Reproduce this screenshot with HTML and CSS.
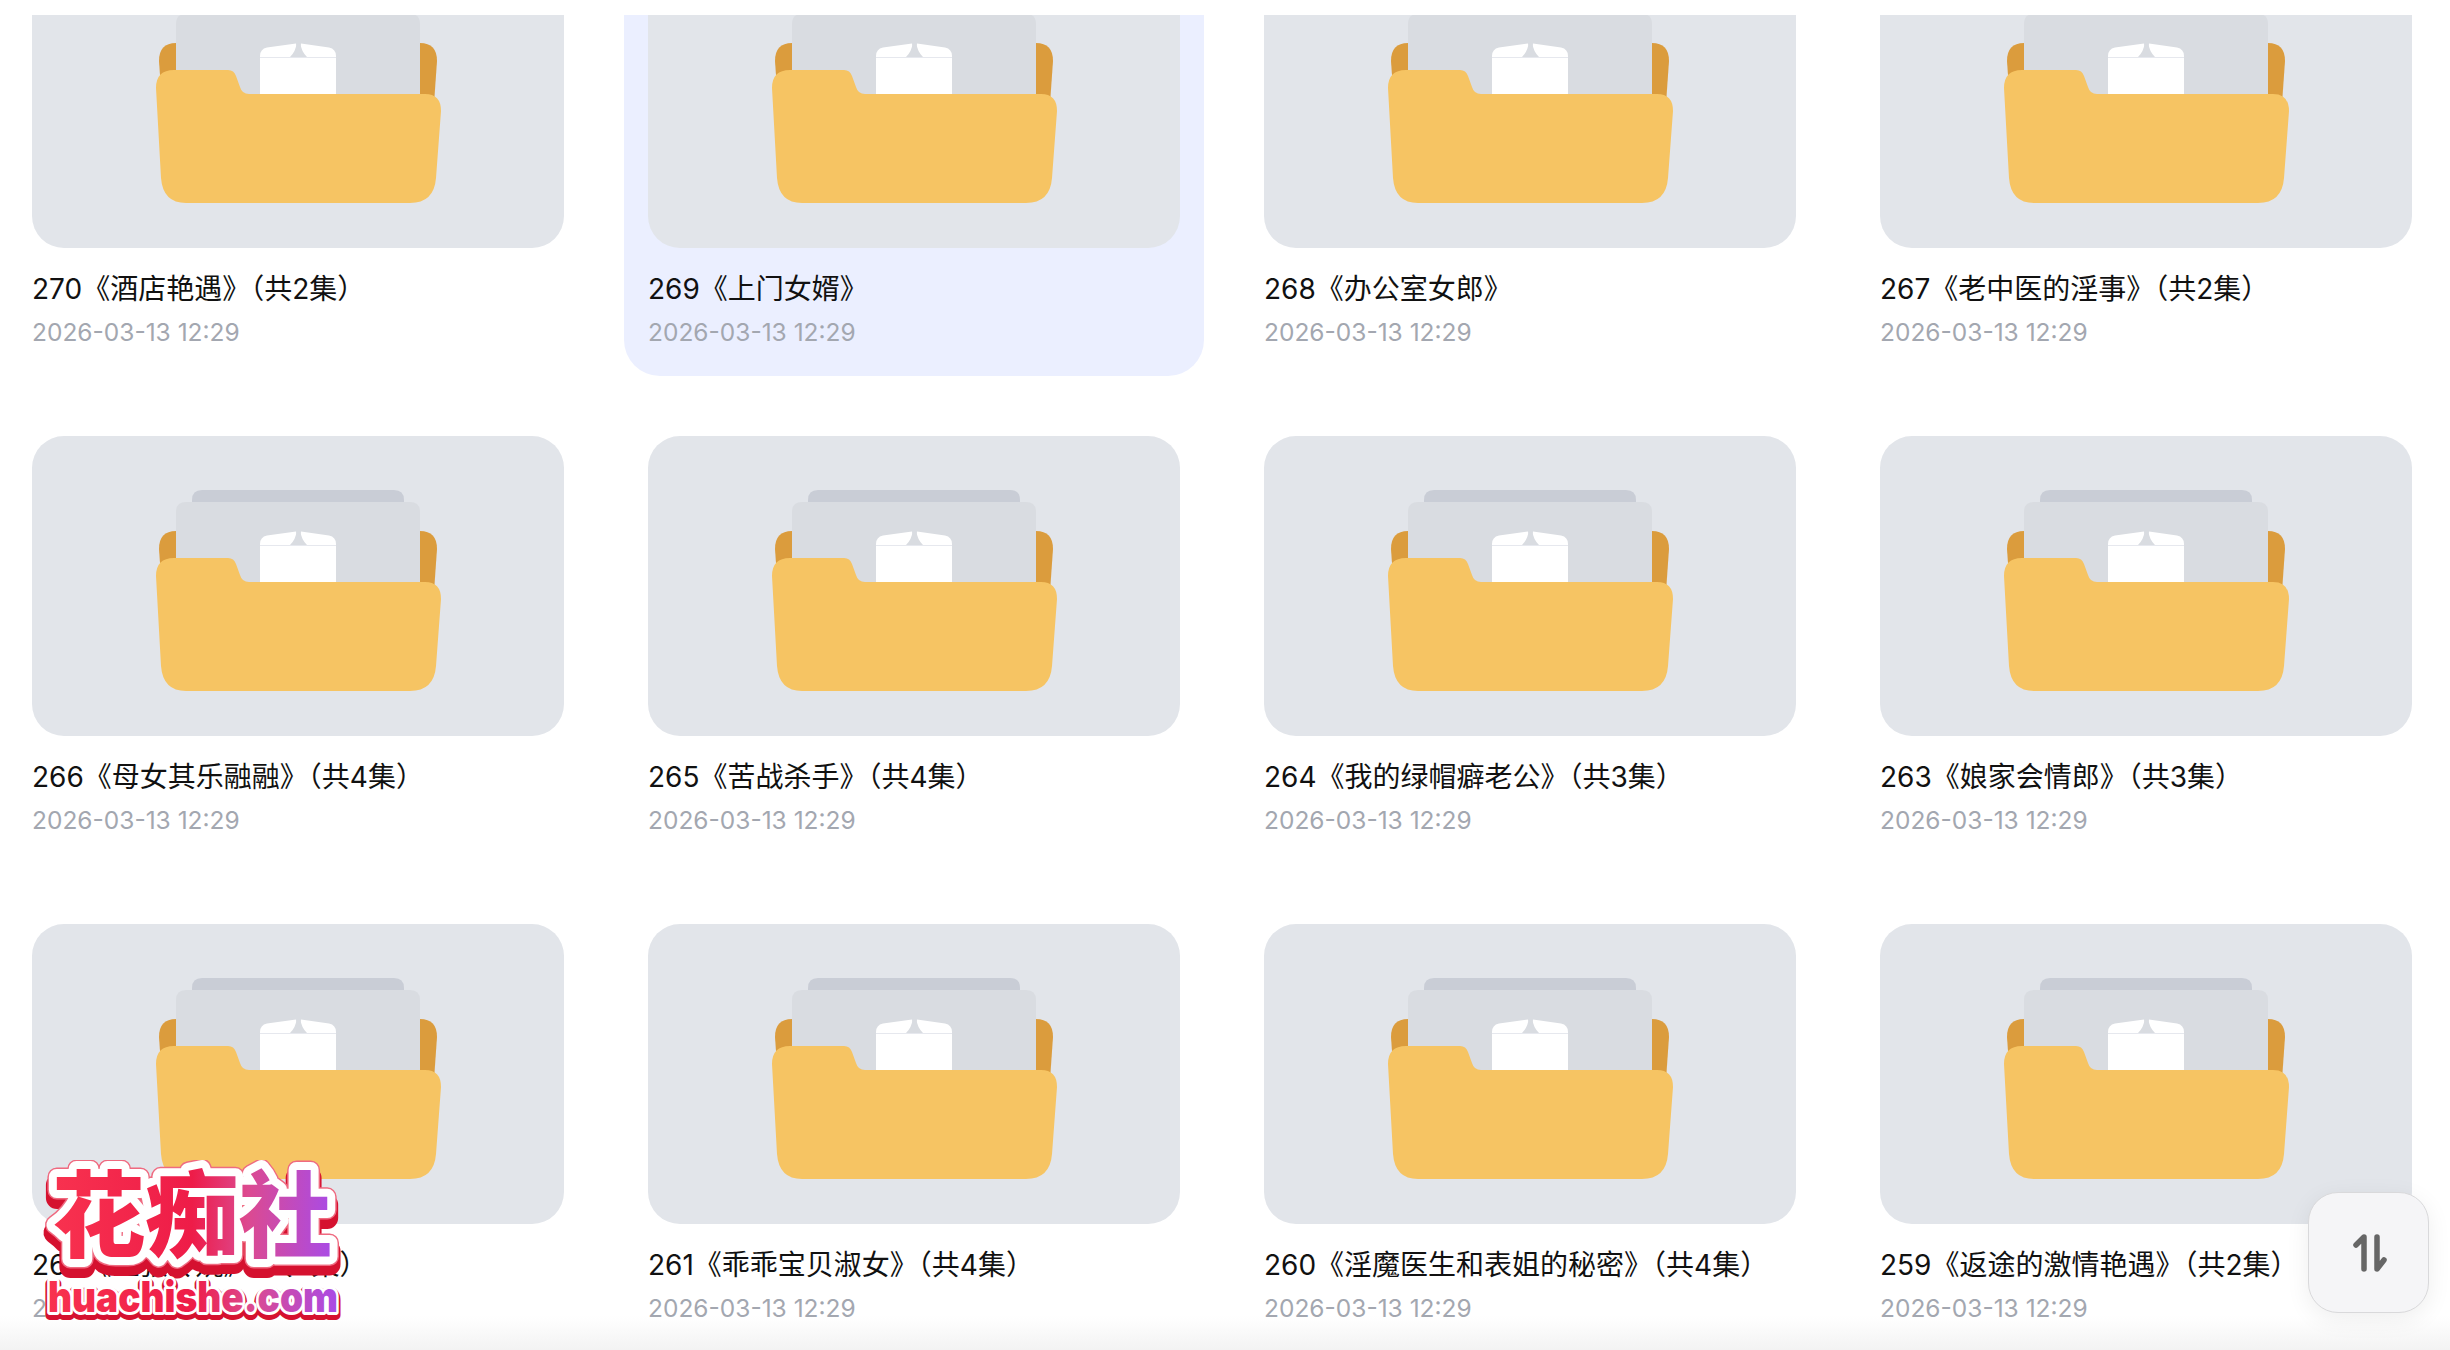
FILE: index.html
```html
<!DOCTYPE html>
<html lang="zh-CN">
<head>
<meta charset="utf-8">
<title>文件夹</title>
<link rel="stylesheet" href="styles.css">
</head>
<body>
<svg class="defs" width="0" height="0" aria-hidden="true">
  <symbol id="folder" viewBox="0 0 300 220">
    <path class="f-back" d="M11 73Q11 55 28 55H272Q289 55 289 73L285 130H15Z"/>
    <path class="f-sheet2" d="M44 40V24Q44 14 54 14H246Q256 14 256 24V40Z"/>
    <path class="f-sheet1" d="M28 110V36Q28 26 38 26H262Q272 26 272 36V110Z"/>
    <path class="f-doc" d="M112 107V68Q112 61 119 59.500L148 55.500Q150 62 150 65H151Q151 62 153 55.500L181 59.500Q188 61 188 68V107Z"/>
    <path class="f-notch" d="M148.500 55L152.500 55Q153 63 159 69H142Q148 63 148.500 55Z"/>
    <path class="f-crease" d="M112 69.500H188"/>
    <path class="f-front" d="M8 100Q8 82 26 82H80Q86 82 88 88L92 99Q94 106 101 106H277Q293 106 293 123L288 190Q286 215 262 215H38Q15 215 13 190Z"/>
  </symbol>
</svg>
<main class="page">
  <div class="viewport">
    <section class="grid">
      <article class="card"><div class="thumb"><svg class="folder"><use href="#folder"/></svg></div><h3 class="title">270《酒店艳遇》（共2集）</h3><p class="date">2026-03-13 12:29</p></article>
      <article class="card active"><div class="thumb"><svg class="folder"><use href="#folder"/></svg></div><h3 class="title">269《上门女婿》</h3><p class="date">2026-03-13 12:29</p></article>
      <article class="card"><div class="thumb"><svg class="folder"><use href="#folder"/></svg></div><h3 class="title">268《办公室女郎》</h3><p class="date">2026-03-13 12:29</p></article>
      <article class="card"><div class="thumb"><svg class="folder"><use href="#folder"/></svg></div><h3 class="title">267《老中医的淫事》（共2集）</h3><p class="date">2026-03-13 12:29</p></article>
      <article class="card"><div class="thumb"><svg class="folder"><use href="#folder"/></svg></div><h3 class="title">266《母女其乐融融》（共4集）</h3><p class="date">2026-03-13 12:29</p></article>
      <article class="card"><div class="thumb"><svg class="folder"><use href="#folder"/></svg></div><h3 class="title">265《苦战杀手》（共4集）</h3><p class="date">2026-03-13 12:29</p></article>
      <article class="card"><div class="thumb"><svg class="folder"><use href="#folder"/></svg></div><h3 class="title">264《我的绿帽癖老公》（共3集）</h3><p class="date">2026-03-13 12:29</p></article>
      <article class="card"><div class="thumb"><svg class="folder"><use href="#folder"/></svg></div><h3 class="title">263《娘家会情郎》（共3集）</h3><p class="date">2026-03-13 12:29</p></article>
      <article class="card"><div class="thumb"><svg class="folder"><use href="#folder"/></svg></div><h3 class="title">262《医张传婉》（共4集）</h3><p class="date">2026-03-13 12:29</p></article>
      <article class="card"><div class="thumb"><svg class="folder"><use href="#folder"/></svg></div><h3 class="title">261《乖乖宝贝淑女》（共4集）</h3><p class="date">2026-03-13 12:29</p></article>
      <article class="card"><div class="thumb"><svg class="folder"><use href="#folder"/></svg></div><h3 class="title">260《淫魔医生和表姐的秘密》（共4集）</h3><p class="date">2026-03-13 12:29</p></article>
      <article class="card"><div class="thumb"><svg class="folder"><use href="#folder"/></svg></div><h3 class="title">259《返途的激情艳遇》（共2集）</h3><p class="date">2026-03-13 12:29</p></article>
    </section>
  </div>
  <div class="bottom-fade"></div>
  <svg class="logo" width="306" height="170" viewBox="0 0 306 170">
    <defs>
      <linearGradient id="logoGrad" x1="0" y1="0" x2="1" y2="0">
        <stop offset="0" stop-color="#f8324f"/>
        <stop offset="0.5" stop-color="#ee1c48"/>
        <stop offset="0.7" stop-color="#dc4a90"/>
        <stop offset="1" stop-color="#a94be6"/>
      </linearGradient>
    </defs>
    <text class="logo-cn logo-edge" x="12" y="98" textLength="280" lengthAdjust="spacingAndGlyphs">花痴社</text>
    <text class="logo-cn logo-rim" x="12" y="90" textLength="280" lengthAdjust="spacingAndGlyphs">花痴社</text>
    <text class="logo-cn logo-halo" x="12" y="90" textLength="280" lengthAdjust="spacingAndGlyphs">花痴社</text>
    <text class="logo-cn logo-fill" x="12" y="90" textLength="280" lengthAdjust="spacingAndGlyphs">花痴社</text>
    <text class="logo-en logo-edge-s" x="8" y="155" textLength="290" lengthAdjust="spacingAndGlyphs">huachishe.com</text>
    <text class="logo-en logo-halo-s" x="8" y="152" textLength="290" lengthAdjust="spacingAndGlyphs">huachishe.com</text>
    <text class="logo-en logo-fill" x="8" y="152" textLength="290" lengthAdjust="spacingAndGlyphs">huachishe.com</text>
  </svg>
  <button class="sort-btn" type="button" aria-label="排序">
    <svg width="40" height="44" viewBox="0 0 40 44"><path class="sort-icon" d="M15 38V6L7 14M28 6V38L35 29"/></svg>
  </button>
</main>
</body>
</html>
```
FILE: styles.css
```css
* { box-sizing: border-box; }
html, body { margin: 0; padding: 0; background: #fff; }
.defs { display: block; height: 0; }
.page {
  position: relative;
  width: 2450px;
  height: 1350px;
  overflow: hidden;
  background: #fff;
  padding-top: 15px;
  font-family: Inter, "Noto Sans CJK SC", sans-serif;
}
.viewport { height: 1335px; overflow: hidden; }
.grid {
  display: grid;
  grid-template-columns: repeat(4, 580px);
  gap: 36px;
  margin: -91px 0 0 8px;
}
.card {
  height: 452px;
  padding: 24px 24px 0;
  border-radius: 36px;
}
.card.active { background: #ebefff; }
.thumb {
  display: flex;
  align-items: center;
  justify-content: center;
  height: 300px;
  border-radius: 32px;
  background: #e2e5ea;
}
.folder { width: 300px; height: 220px; }
.f-back { fill: #db9c3d; }
.f-sheet2 { fill: #c9cdd6; }
.f-sheet1 { fill: #d9dce1; }
.f-doc { fill: #fff; }
.f-notch { fill: #d9dce1; }
.f-crease { stroke: #e6e8ee; stroke-width: 1; fill: none; }
.f-front { fill: #f6c463; }
.title {
  margin: 25px 0 0;
  font-size: 28px;
  font-weight: 400;
  line-height: 32px;
  color: #111;
  white-space: nowrap;
}
.date {
  margin: 11px 0 0;
  font-size: 24.500px;
  line-height: 32px;
  color: #a3a7b0;
  white-space: nowrap;
}
.bottom-fade {
  position: absolute;
  left: 0;
  right: 0;
  bottom: 0;
  height: 34px;
  background: linear-gradient(to bottom, rgba(243,243,243,0), #f3f3f3);
}
.sort-btn {
  position: absolute;
  left: 2308px;
  top: 1192px;
  width: 121px;
  height: 121px;
  display: flex;
  align-items: center;
  justify-content: center;
  padding: 0;
  border: 1.5px solid #d9d9db;
  border-radius: 30px;
  background: #f5f5f7;
  box-shadow: 0 6px 24px rgba(0,0,0,.07);
}
.sort-icon {
  fill: none;
  stroke: #666;
  stroke-width: 5.500;
  stroke-linecap: round;
  stroke-linejoin: round;
}
.logo { position: absolute; left: 40px; top: 1160px; }
.logo-cn { font-family: "Noto Sans CJK SC", sans-serif; font-weight: 900; font-size: 94px; }
.logo-en { font-family: Inter, "Noto Sans", sans-serif; font-weight: 900; font-size: 42px; }
.logo-edge { fill: #d5112f; stroke: #d5112f; stroke-width: 22px; stroke-linejoin: round; }
.logo-rim { fill: #ef6a80; stroke: #ef6a80; stroke-width: 19px; stroke-linejoin: round; }
.logo-halo { fill: #fff; stroke: #fff; stroke-width: 16px; stroke-linejoin: round; }
.logo-edge-s { fill: #d5112f; stroke: #d5112f; stroke-width: 10px; stroke-linejoin: round; }
.logo-halo-s { fill: #fff; stroke: #fff; stroke-width: 6px; stroke-linejoin: round; }
.logo-fill { fill: url(#logoGrad); }
```
